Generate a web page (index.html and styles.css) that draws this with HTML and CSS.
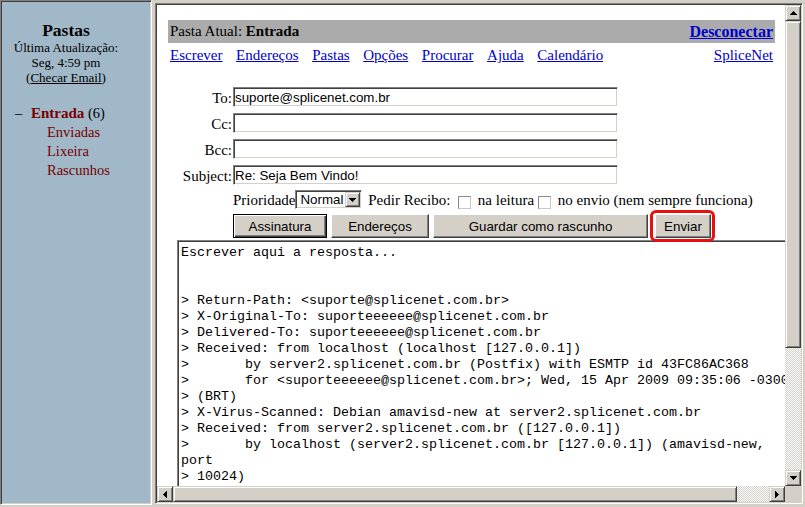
FILE: index.html
```html
<!DOCTYPE html>
<html lang="pt-BR">
<head>
<meta charset="utf-8">
<title>SpliceNet Webmail - Escrever</title>
<link rel="stylesheet" href="styles.css">
</head>
<body>
<div class="screen">
  <nav class="left-frame">
    <div class="sidebar-head">
      <div class="sidebar-title">Pastas</div>
      <div class="sidebar-meta">Última Atualização:<br>Seg, 4:59 pm<br>(<a href="#">Checar Email</a>)</div>
    </div>
    <ul class="folders">
      <li class="folder folder-current"><span class="dash">–</span><a href="#" class="folder-link current">Entrada</a>&nbsp;<span class="count">(6)</span></li>
      <li class="folder"><a href="#" class="folder-link">Enviadas</a></li>
      <li class="folder"><a href="#" class="folder-link">Lixeira</a></li>
      <li class="folder"><a href="#" class="folder-link">Rascunhos</a></li>
    </ul>
  </nav>
  <main class="right-frame">
    <div class="view-row">
      <div class="viewport">
        <div class="location-bar">
          <span class="location">Pasta Atual: <b>Entrada</b></span>
          <a href="#" class="logout">Desconectar</a>
        </div>
        <div class="nav-links">
          <a href="#">Escrever</a>
          <a href="#">Endereços</a>
          <a href="#">Pastas</a>
          <a href="#">Opções</a>
          <a href="#">Procurar</a>
          <a href="#">Ajuda</a>
          <a href="#">Calendário</a>
          <a href="#" class="brand-link">SpliceNet</a>
        </div>
        <form class="compose">
          <div class="fields">
            <label class="field-label" for="f-to">To:</label>
            <input id="f-to" class="field-input" type="text" value="suporte@splicenet.com.br">
            <label class="field-label" for="f-cc">Cc:</label>
            <input id="f-cc" class="field-input" type="text" value="">
            <label class="field-label" for="f-bcc">Bcc:</label>
            <input id="f-bcc" class="field-input" type="text" value="">
            <label class="field-label" for="f-subject">Subject:</label>
            <input id="f-subject" class="field-input" type="text" value="Re: Seja Bem Vindo!">
          </div>
          <div class="options">Prioridade<span class="select"><span class="select-value">Normal</span><span class="select-btn"><svg width="7" height="4" viewBox="0 0 7 4"><path d="M0 0h7v1H6v1H5v1H4v1H3V3H2V2H1V1H0z" fill="#000"/></svg></span></span> Pedir Recibo: <input type="checkbox" class="check"> na leitura<input type="checkbox" class="check"> no envio (nem sempre funciona)</div>
          <div class="actions">
            <button type="button" class="btn btn-default btn-sig">Assinatura</button>
            <button type="button" class="btn btn-addr">Endereços</button>
            <button type="button" class="btn btn-draft">Guardar como rascunho</button>
            <span class="send-wrap"><button type="button" class="btn btn-send">Enviar</button></span>
          </div>
          <textarea class="body-text" wrap="off" spellcheck="false">Escrever aqui a resposta...


&gt; Return-Path: &lt;suporte@splicenet.com.br&gt;
&gt; X-Original-To: suporteeeeee@splicenet.com.br
&gt; Delivered-To: suporteeeeee@splicenet.com.br
&gt; Received: from localhost (localhost [127.0.0.1])
&gt;       by server2.splicenet.com.br (Postfix) with ESMTP id 43FC86AC368
&gt;       for &lt;suporteeeeee@splicenet.com.br&gt;; Wed, 15 Apr 2009 09:35:06 -0300
&gt; (BRT)
&gt; X-Virus-Scanned: Debian amavisd-new at server2.splicenet.com.br
&gt; Received: from server2.splicenet.com.br ([127.0.0.1])
&gt;       by localhost (server2.splicenet.com.br [127.0.0.1]) (amavisd-new,
port
&gt; 10024)</textarea>
        </form>
      </div>
      <div class="vscroll">
        <span class="sbtn"><svg width="7" height="4" viewBox="0 0 7 4"><path d="M3 0h1v1h1v1h1v1h1v1H0V3h1V2h1V1h1z" fill="#000"/></svg></span>
        <span class="sthumb sthumb-v"></span>
        <span class="strack"></span>
        <span class="sbtn"><svg width="7" height="4" viewBox="0 0 7 4"><path d="M0 0h7v1H6v1H5v1H4v1H3V3H2V2H1V1H0z" fill="#000"/></svg></span>
      </div>
    </div>
    <div class="hscroll-row">
      <div class="hscroll">
        <span class="sbtn"><svg width="4" height="7" viewBox="0 0 4 7"><path d="M4 0v7H3V6H2V5H1V4H0V3h1V2h1V1h1V0z" fill="#000"/></svg></span>
        <span class="sthumb sthumb-h"></span>
        <span class="strack"></span>
        <span class="sbtn"><svg width="4" height="7" viewBox="0 0 4 7"><path d="M0 0h1v1h1v1h1v1h1v1H3v1H2v1H1v1H0z" fill="#000"/></svg></span>
      </div>
      <div class="corner"></div>
    </div>
  </main>
</div>
</body>
</html>
```

FILE: styles.css
```css
* {
  box-sizing: border-box;
}

html,
body {
  margin: 0;
  padding: 0;
}

body {
  width: 805px;
  height: 507px;
  overflow: hidden;
  background: #d4d0c8;
  font-family: "Liberation Serif", "Times New Roman", serif;
  color: #000;
}

.screen {
  display: flex;
  align-items: flex-start;
  width: 805px;
  height: 507px;
}

/* ---------- left frame ---------- */
.left-frame {
  flex: none;
  width: 152px;
  height: 505px;
  background: #a0b8c8;
  border: 1px solid;
  border-color: #808080 #fff #fff #808080;
  box-shadow: inset 1px 1px #404040, inset -1px -1px #d4d0c8;
  padding: 19px 0 0 1px;
}

.sidebar-head {
  width: 128px;
  text-align: center;
}

.sidebar-title {
  font-weight: bold;
  font-size: 17.5px;
  line-height: 20px;
}

.sidebar-meta {
  font-size: 13px;
  line-height: 15px;
}

.sidebar-meta a {
  color: #000;
}

.folders {
  list-style: none;
  margin: 19px 0 0;
  padding: 0;
}

.folder {
  font-size: 14.5px;
  line-height: 19px;
  padding-left: 45px;
  white-space: nowrap;
}

.folder-current {
  padding-left: 13px;
  display: flex;
}

.dash {
  width: 16px;
  flex: none;
}

.folder-link {
  color: #770000;
  text-decoration: none;
}

.folder-link.current {
  font-weight: bold;
  font-size: 15px;
}

/* ---------- right frame ---------- */
.right-frame {
  flex: none;
  margin: 3px 0 0 3px;
  width: 648px;
  height: 501px;
  border: 1px solid;
  border-color: #808080 #fff #fff #808080;
  box-shadow: inset 1px 1px #404040, inset -1px -1px #d4d0c8;
  padding: 1px;
  display: flex;
  flex-direction: column;
  background: #d4d0c8;
}

.view-row {
  display: flex;
  height: 481px;
}

.viewport {
  width: 628px;
  height: 481px;
  overflow: hidden;
  background: #fff;
  padding: 15px 10px 0 11px;
}

.location-bar {
  height: 23px;
  background: #ababab;
  display: flex;
  justify-content: space-between;
  align-items: center;
  padding: 0 2px;
  font-size: 15px;
  line-height: 23px;
  white-space: nowrap;
}

.logout {
  color: #0000cc;
  font-weight: bold;
  font-size: 16px;
}

.nav-links {
  display: flex;
  gap: 13.6px;
  padding: 3px 2px 0;
  font-size: 15px;
  line-height: 18px;
  white-space: nowrap;
}

.nav-links a {
  color: #0000cc;
}

.nav-links .brand-link {
  margin-left: auto;
}

/* ---------- compose form ---------- */
.compose {
  margin: 23px 0 0;
}

.fields {
  display: grid;
  grid-template-columns: 65px 385px;
  grid-auto-rows: 20px;
  row-gap: 6px;
}

.field-label {
  text-align: right;
  padding: 1px 1px 0 0;
  font-size: 15px;
  line-height: 20px;
  height: 20px;
  overflow: visible;
}

.field-input {
  width: 385px;
  height: 20px;
  margin: 0;
  border: 1px solid;
  border-color: #808080 #fff #fff #808080;
  box-shadow: inset 1px 1px #404040, inset -1px -1px #d4d0c8;
  padding: 0 1px;
  background: #fff;
  font-family: "Liberation Sans", Arial, sans-serif;
  font-size: 13.33px;
  color: #000;
  outline: none;
}

.options {
  margin: 5px 0 0 65px;
  height: 19px;
  font-size: 15px;
  line-height: 21px;
  white-space: nowrap;
}

.select {
  display: inline-flex;
  align-items: center;
  justify-content: space-between;
  vertical-align: top;
  width: 67px;
  height: 19px;
  margin-right: 2px;
  border: 1px solid;
  border-color: #808080 #fff #fff #808080;
  box-shadow: inset 1px 1px #404040, inset -1px -1px #d4d0c8;
  padding: 0 1px 0 4px;
  background: #fff;
  font-family: "Liberation Sans", Arial, sans-serif;
  font-size: 13.33px;
  line-height: 15px;
}

.select-btn {
  width: 15px;
  height: 15px;
  display: flex;
  align-items: center;
  justify-content: center;
  background: #d4d0c8;
  border: 1px solid;
  border-color: #d4d0c8 #404040 #404040 #d4d0c8;
  box-shadow: inset 1px 1px #fff, inset -1px -1px #808080;
}

.check {
  appearance: none;
  -webkit-appearance: none;
  display: inline-block;
  vertical-align: top;
  width: 13px;
  height: 13px;
  margin: 6px 3px 0 4px;
  border: 1px solid;
  border-color: #8a8a8a #c8c8c8 #c8c8c8 #8a8a8a;
  background: #fff;
}

.actions {
  margin: 5px 0 0 65px;
  display: flex;
  height: 24px;
}

.btn {
  height: 24px;
  margin: 0;
  padding: 0;
  background: #d4d0c8;
  border: 1px solid;
  border-color: #fff #404040 #404040 #fff;
  box-shadow: inset -1px -1px #808080, inset 1px 1px #d4d0c8;
  font-family: "Liberation Sans", Arial, sans-serif;
  font-size: 13.33px;
  color: #000;
  text-align: center;
}

.btn-default {
  border-color: #000;
  box-shadow: inset 1px 1px #fff, inset -1px -1px #404040, inset -2px -2px #808080;
}

.btn-sig {
  width: 94px;
  margin-right: 4px;
}

.btn-addr {
  width: 98px;
  margin-right: 4px;
}

.btn-draft {
  width: 215px;
  margin-right: 7px;
}

.btn-send {
  width: 56px;
}

.send-wrap {
  position: relative;
  display: block;
}

.send-wrap::after {
  content: "";
  position: absolute;
  left: -5px;
  top: -4px;
  right: -4px;
  bottom: -4px;
  border: 3px solid #ea0f0f;
  border-radius: 6px;
  pointer-events: none;
}

.body-text {
  display: block;
  margin: 2px 0 0 9px;
  width: 640px;
  height: 260px;
  border: 1px solid;
  border-color: #808080 #fff #fff #808080;
  box-shadow: inset 1px 1px #404040, inset -1px -1px #d4d0c8;
  padding: 4px 3px 3px;
  background: #fff;
  font-family: "Liberation Mono", "Courier New", monospace;
  font-size: 13.33px;
  line-height: 16px;
  color: #000;
  white-space: pre;
  overflow: hidden;
  resize: none;
  outline: none;
}

/* ---------- scrollbars ---------- */
.vscroll {
  width: 16px;
  display: flex;
  flex-direction: column;
  background: repeating-conic-gradient(#d4d0c8 0 25%, #fff 0 50%) 0 0 / 2px 2px;
}

.hscroll-row {
  display: flex;
  height: 16px;
}

.hscroll {
  width: 628px;
  display: flex;
  background: repeating-conic-gradient(#d4d0c8 0 25%, #fff 0 50%) 0 0 / 2px 2px;
}

.corner {
  width: 16px;
  background: #d4d0c8;
}

.sbtn,
.sthumb {
  flex: none;
  background: #d4d0c8;
  border: 1px solid;
  border-color: #d4d0c8 #404040 #404040 #d4d0c8;
  box-shadow: inset 1px 1px #fff, inset -1px -1px #808080;
}

.sbtn {
  width: 16px;
  height: 16px;
  display: flex;
  align-items: center;
  justify-content: center;
}

.sbtn svg {
  display: block;
}

.sthumb-v {
  height: 327px;
}

.sthumb-h {
  width: 564px;
}

.strack {
  flex: 1;
}
```
